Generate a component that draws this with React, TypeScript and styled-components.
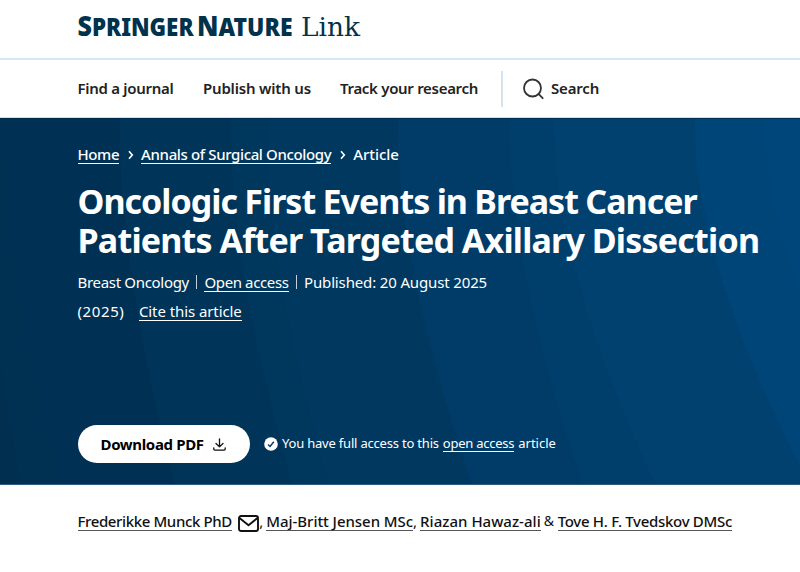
import React from 'react';
import styled, { createGlobalStyle } from 'styled-components';

const GlobalStyle = createGlobalStyle`
  body { margin: 0; background: #fff; }
  * { box-sizing: border-box; }
`;

const Page = styled.div`
  height: 572px;
  overflow: hidden;
  display: flex;
  flex-direction: column;
  color: #222;
  font: 400 15px/18px "Noto Sans", sans-serif;
`;

const Header = styled.header`
  height: 60px;
  flex: none;
  padding: 8px 0 0 76px;
  border-bottom: 2px solid #d5e7f6;
`;

const Nav = styled.nav`
  height: 58px;
  flex: none;
  display: flex;
  align-items: center;
  padding-left: 77.5px;
  border-bottom: 1px solid #d3dce4;
`;

const NavLink = styled.a<{ $width: number; $track: number }>`
  flex: none;
  width: ${p => p.$width}px;
  margin: -2px 29px 0 0;
  font-weight: 600;
  letter-spacing: ${p => p.$track}px;
  white-space: nowrap;
`;

const SearchButton = styled.div`
  display: flex;
  align-items: center;
  height: 36px;
  margin-left: -6px;
  padding-left: 19.5px;
  border-left: 2px solid #d5e3ee;
`;

const SearchIcon = styled.svg`
  width: 21px;
  height: 22px;
  flex: none;
`;

const SearchLabel = styled.span`
  margin: -2px 0 0 7.5px;
  font-weight: 600;
  letter-spacing: -0.18px;
`;

const Hero = styled.section`
  position: relative;
  height: 367px;
  flex: none;
  padding: 27px 0 0 77.5px;
  color: #fff;
  background: #002f4f;
  border-bottom: 1px solid #2c5b7f;
`;

const Backdrop = styled.svg`
  position: absolute;
  inset: 0;
  width: 100%;
  height: 100%;
`;

const HeroContent = styled.div`
  position: relative;
`;

const Row = styled.div<{ $top?: number }>`
  display: flex;
  height: 19px;
  margin-top: ${p => p.$top ?? 0}px;
  white-space: nowrap;
`;

const Text = styled.span<{ $track?: number; $weight?: number }>`
  flex: none;
  font-weight: ${p => p.$weight ?? 400};
  letter-spacing: ${p => p.$track ?? 0}px;
`;

const Link = styled(Text).attrs({ as: 'a' })`
  height: 19px;
  border-bottom: 1px solid currentColor;
`;

const Chevron = styled.svg`
  width: 8px;
  height: 10px;
  margin: 5px 6.5px 0 7.5px;
  flex: none;
`;

const Title = styled.h1`
  margin: 18px 0 0;
  font-size: 34px;
  font-weight: 700;
  line-height: 39px;
  word-spacing: -0.5px;
  white-space: nowrap;
`;

const TitleLine = styled.span<{ $track: number }>`
  display: block;
  letter-spacing: ${p => p.$track}px;
`;

const Divider = styled.span`
  width: 1px;
  height: 14px;
  margin: 2px 7.5px 0 7px;
  background: #c3d0dc;
`;

const CiteGap = styled.span`
  width: 14.5px;
  flex: none;
`;

const Actions = styled.div`
  display: flex;
  align-items: center;
  margin-top: 104px;
`;

const DownloadButton = styled.a`
  display: flex;
  align-items: center;
  width: 172px;
  height: 38px;
  padding: 0 0 1px 23px;
  gap: 9px;
  border-radius: 19px;
  background: #fff;
  color: #000;
  font-weight: 700;
  letter-spacing: -0.35px;
`;

const DownloadIcon = styled.svg`
  width: 13px;
  height: 13px;
  margin-top: 2px;
  flex: none;
`;

const Access = styled.div`
  display: flex;
  height: 17px;
  margin: -2px 0 0 14.5px;
  font-size: 13px;
  line-height: 16px;
  white-space: nowrap;
`;

const AccessLink = styled(Link)`
  height: 17px;
  margin: 0 4px;
`;

const CheckIcon = styled.svg`
  width: 14px;
  height: 14px;
  margin: 2px 4px 0 0;
  flex: none;
`;

const Authors = styled.div`
  display: flex;
  padding: 27px 0 0 77.5px;
  color: #111;
  white-space: nowrap;
`;

const AuthorLink = styled(Link)`
  border-bottom-color: #555;
  font-weight: 500;
`;

const MailIcon = styled.svg`
  width: 21px;
  height: 17px;
  margin: 3px 0 0 6.5px;
  flex: none;
`;

const Separator = styled.span`
  width: 7px;
  flex: none;
`;

const Ampersand = styled.span`
  width: 17px;
  padding-left: 3px;
  flex: none;
  font-size: 14px;
`;

const bands = [
  { top: -20, bottom: 20, color: '#003052' },
  { top: 4, bottom: 61, color: '#003155' },
  { top: 120, bottom: 175, color: '#003459' },
  { top: 231, bottom: 292, color: '#00375c' },
  { top: 267, bottom: 328, color: '#003860' },
  { top: 398, bottom: 472, color: '#003c67' },
  { top: 510, bottom: 582, color: '#003f6b' },
  { top: 554, bottom: 655, color: '#004170' },
  { top: 695, bottom: 809, color: '#004578' },
  { top: 765, bottom: 890, color: '#00467a' },
];

const Logo = () => (
  <svg width="290" height="38" viewBox="76 8 290 38" fill="#01324b" role="img">
    <g fontFamily='"Noto Sans", sans-serif' fontWeight="900" fontSize="24.5">
      <text x="77.5" y="36" textLength="116" lengthAdjust="spacingAndGlyphs"><tspan fontSize="27.5">S</tspan>PRINGER</text>
      <text x="197" y="36" textLength="95.5" lengthAdjust="spacingAndGlyphs"><tspan fontSize="27.5">N</tspan>ATURE</text>
    </g>
    <text x="301" y="36" fontFamily='"DejaVu Serif", serif' fontSize="26" textLength="59" lengthAdjust="spacingAndGlyphs">Link</text>
  </svg>
);

const Crumb = () => (
  <Chevron viewBox="0 0 8 10" fill="none" stroke="#fff" strokeWidth="1.6">
    <path d="M2 1.2 5.3 5 2 8.8" />
  </Chevron>
);

export default function App() {
  return (
    <>
      <GlobalStyle />
      <Page>
        <Header><Logo /></Header>
        <Nav>
          <NavLink $width={96.5} $track={-0.286}>Find a journal</NavLink>
          <NavLink $width={108} $track={-0.187}>Publish with us</NavLink>
          <NavLink $width={138} $track={-0.3}>Track your research</NavLink>
          <SearchButton>
            <SearchIcon viewBox="0 0 21 22" fill="none" stroke="#333" strokeWidth="1.8" strokeLinecap="round">
              <circle cx="9.5" cy="10" r="8.5" />
              <path d="m15.7 16.2 4 4" />
            </SearchIcon>
            <SearchLabel>Search</SearchLabel>
          </SearchButton>
        </Nav>
        <Hero>
          <Backdrop viewBox="0 118 800 367" preserveAspectRatio="none">
            {bands.map(b => (
              <path key={b.top} fill={b.color} d={`M${b.top} 118Q${b.top - 3} 260 ${b.bottom} 485H900V118Z`} />
            ))}
            <path fill="#002b4b" opacity=".7" d="M0 118h800v1H0z" />
          </Backdrop>
          <HeroContent>
            <Row>
              <Link $track={-0.4} $weight={500}>Home</Link>
              <Crumb />
              <Link $track={-0.37} $weight={500}>Annals of Surgical Oncology</Link>
              <Crumb />
              <Text $track={-0.07} $weight={500}>Article</Text>
            </Row>
            <Title>
              <TitleLine $track={-0.99}>Oncologic First Events in Breast Cancer</TitleLine>
              <TitleLine $track={-0.78}>Patients After Targeted Axillary Dissection</TitleLine>
            </Title>
            <Row $top={13}>
              <Text $track={-0.31}>Breast Oncology</Text>
              <Divider />
              <Link $track={-0.38}>Open access</Link>
              <Divider />
              <Text $track={-0.144}>Published: 20 August 2025</Text>
            </Row>
            <Row $top={10}>
              <Text $track={0.6}>(2025)</Text>
              <CiteGap />
              <Link $track={-0.08}>Cite this article</Link>
            </Row>
            <Actions>
              <DownloadButton>
                Download PDF
                <DownloadIcon viewBox="0 0 13 13" fill="none" stroke="#111" strokeWidth="1.3" strokeLinecap="round" strokeLinejoin="round">
                  <path d="M6.5 .8v8M3 5.5l3.5 3.4L10 5.5M.8 9.8v1.3q0 1.1 1.1 1.1h9.2q1.1 0 1.1-1.1V9.8" />
                </DownloadIcon>
              </DownloadButton>
              <Access>
                <CheckIcon viewBox="0 0 14 14">
                  <circle cx="7" cy="7" r="6.8" fill="#fff" />
                  <path d="m4 7.6 2 1.8 3.8-4.7" fill="none" stroke="#003860" strokeWidth="1.4" />
                </CheckIcon>
                <Text $track={-0.2}>You have full access to this</Text>
                <AccessLink $track={-0.25}>open access</AccessLink>
                <Text>article</Text>
              </Access>
            </Actions>
          </HeroContent>
        </Hero>
        <Authors>
          <AuthorLink $track={-0.38}>Frederikke Munck PhD</AuthorLink>
          <MailIcon viewBox="0 0 21 17" fill="none" stroke="#111" strokeWidth="1.9" strokeLinejoin="round">
            <rect x="1" y="1" width="19" height="15" rx="2" />
            <path d="m1.5 3 9 7.2 9-7.2" />
          </MailIcon>
          <Separator>,</Separator>
          <AuthorLink $track={-0.05}>Maj-Britt Jensen MSc</AuthorLink>
          <Separator>,</Separator>
          <AuthorLink $track={0.02}>Riazan Hawaz-ali</AuthorLink>
          <Ampersand>&amp;</Ampersand>
          <AuthorLink $track={-0.3}>Tove H. F. Tvedskov DMSc</AuthorLink>
        </Authors>
      </Page>
    </>
  );
}
